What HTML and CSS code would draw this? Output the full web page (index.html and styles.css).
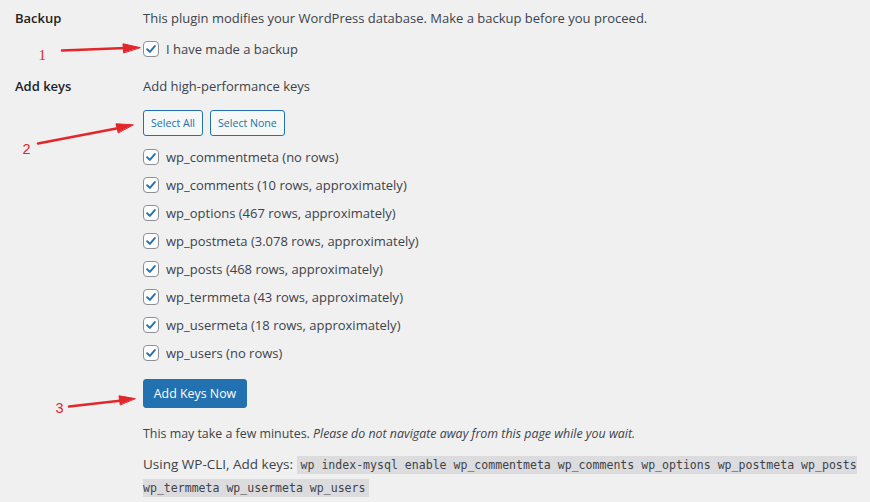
FILE: index.html
```html
<!DOCTYPE html>
<html lang="en">
<head>
<meta charset="utf-8">
<title>Index MySQL</title>
<link rel="stylesheet" href="styles.css">
</head>
<body>
<div class="form">
  <div class="row row-backup">
    <div class="label">Backup</div>
    <div class="field">
      <p class="text">This plugin modifies your WordPress database. Make a backup before you proceed.</p>
      <label class="cb cb-backup"><span class="box"><svg viewBox="0 0 16 16" width="16" height="16"><path d="M3.6 8.3 L6.7 11.3 L12.4 4.6" fill="none" stroke="#2271b1" stroke-width="2.2" stroke-linecap="round" stroke-linejoin="round"/></svg></span>I have made a backup</label>
    </div>
  </div>
  <div class="row row-keys">
    <div class="label">Add keys</div>
    <div class="field">
      <p class="text">Add high-performance keys</p>
      <div class="btns">
        <button class="btn">Select All</button>
        <button class="btn">Select None</button>
      </div>
      <ul class="tables">
        <li><label class="cb"><span class="box"><svg viewBox="0 0 16 16" width="16" height="16"><path d="M3.6 8.3 L6.7 11.3 L12.4 4.6" fill="none" stroke="#2271b1" stroke-width="2.2" stroke-linecap="round" stroke-linejoin="round"/></svg></span>wp_commentmeta (no rows)</label></li>
        <li><label class="cb"><span class="box"><svg viewBox="0 0 16 16" width="16" height="16"><path d="M3.6 8.3 L6.7 11.3 L12.4 4.6" fill="none" stroke="#2271b1" stroke-width="2.2" stroke-linecap="round" stroke-linejoin="round"/></svg></span>wp_comments (10 rows, approximately)</label></li>
        <li><label class="cb"><span class="box"><svg viewBox="0 0 16 16" width="16" height="16"><path d="M3.6 8.3 L6.7 11.3 L12.4 4.6" fill="none" stroke="#2271b1" stroke-width="2.2" stroke-linecap="round" stroke-linejoin="round"/></svg></span>wp_options (467 rows, approximately)</label></li>
        <li><label class="cb"><span class="box"><svg viewBox="0 0 16 16" width="16" height="16"><path d="M3.6 8.3 L6.7 11.3 L12.4 4.6" fill="none" stroke="#2271b1" stroke-width="2.2" stroke-linecap="round" stroke-linejoin="round"/></svg></span>wp_postmeta (3.078 rows, approximately)</label></li>
        <li><label class="cb"><span class="box"><svg viewBox="0 0 16 16" width="16" height="16"><path d="M3.6 8.3 L6.7 11.3 L12.4 4.6" fill="none" stroke="#2271b1" stroke-width="2.2" stroke-linecap="round" stroke-linejoin="round"/></svg></span>wp_posts (468 rows, approximately)</label></li>
        <li><label class="cb"><span class="box"><svg viewBox="0 0 16 16" width="16" height="16"><path d="M3.6 8.3 L6.7 11.3 L12.4 4.6" fill="none" stroke="#2271b1" stroke-width="2.2" stroke-linecap="round" stroke-linejoin="round"/></svg></span>wp_termmeta (43 rows, approximately)</label></li>
        <li><label class="cb"><span class="box"><svg viewBox="0 0 16 16" width="16" height="16"><path d="M3.6 8.3 L6.7 11.3 L12.4 4.6" fill="none" stroke="#2271b1" stroke-width="2.2" stroke-linecap="round" stroke-linejoin="round"/></svg></span>wp_usermeta (18 rows, approximately)</label></li>
        <li><label class="cb"><span class="box"><svg viewBox="0 0 16 16" width="16" height="16"><path d="M3.6 8.3 L6.7 11.3 L12.4 4.6" fill="none" stroke="#2271b1" stroke-width="2.2" stroke-linecap="round" stroke-linejoin="round"/></svg></span>wp_users (no rows)</label></li>
      </ul>
      <button class="btn-primary">Add Keys Now</button>
      <p class="note">This may take a few minutes. <em>Please do not navigate away from this page while you wait.</em></p>
      <p class="cli">Using WP-CLI, Add keys: <code>wp index-mysql enable wp_commentmeta wp_comments wp_options wp_postmeta wp_posts wp_termmeta wp_usermeta wp_users</code></p>
    </div>
  </div>
</div>
<svg class="annot" width="870" height="502" viewBox="0 0 870 502">
  <g stroke="#e3262a" stroke-width="2.6" stroke-linecap="round" fill="#e3262a">
    <line x1="62" y1="50.5" x2="126" y2="48"/>
    <polygon points="140,47.6 123,43.8 123.6,52.6" stroke-width="1"/>
    <line x1="38" y1="143.5" x2="119" y2="128"/>
    <polygon points="133,124.8 116,123.8 118.2,132.6" stroke-width="1"/>
    <line x1="69" y1="406.5" x2="122" y2="400.5"/>
    <polygon points="135,398.6 119,395.8 120.2,404.6" stroke-width="1"/>
  </g>
  <text class="num num-serif" x="38.5" y="59.5">1</text>
  <text class="num" x="22.5" y="154">2</text>
  <text class="num" x="55.5" y="412.5">3</text>
</svg>
</body>
</html>
```
FILE: styles.css
```css
html, body {
  margin: 0;
  padding: 0;
}
body {
  background: #f0f0f1;
  color: #3c434a;
  font-family: "Open Sans", "Noto Sans", sans-serif;
  font-size: 13px;
  width: 870px;
  height: 502px;
  overflow: hidden;
  position: relative;
}
.form {
  padding-top: 8px;
}
.row {
  display: grid;
  grid-template-columns: 143px 1fr;
}
.row-keys {
  margin-top: 17px;
}
.label {
  padding-left: 15px;
  font-weight: 600;
  color: #1d2327;
  line-height: 20px;
}
.field {
  padding-right: 8px;
  line-height: 20px;
}
.text {
  margin: 0;
}
.cb {
  display: flex;
  align-items: center;
  height: 20px;
}
.cb-backup {
  margin-top: 11px;
}
.box {
  width: 16px;
  height: 16px;
  box-sizing: border-box;
  border: 1px solid #8c8f94;
  border-radius: 4px;
  background: #fff;
  display: flex;
  align-items: center;
  justify-content: center;
  margin-right: 7px;
  flex: none;
}
.box svg {
  display: block;
  width: 14px;
  height: 14px;
}
.btns {
  margin-top: 14px;
  display: flex;
  gap: 7px;
}
.btn {
  height: 26px;
  box-sizing: border-box;
  border: 1px solid #2271b1;
  border-radius: 3px;
  background: #f6f7f7;
  color: #2271b1;
  font-family: "Open Sans", "Noto Sans", sans-serif;
  font-size: 10.6px;
  padding: 0 7px;
  margin: 0;
}
.tables {
  list-style: none;
  margin: 7px 0 0;
  padding: 0;
}
.tables li {
  height: 28px;
  display: flex;
  align-items: center;
}
.btn-primary {
  margin-top: 12px;
  height: 29px;
  width: 104px;
  border: 1px solid #2271b1;
  border-radius: 3px;
  background: #2271b1;
  color: #fff;
  font-family: "Open Sans", "Noto Sans", sans-serif;
  font-size: 12.4px;
  padding: 0;
  display: block;
}
.note {
  margin: 16px 0 0;
  font-size: 12.4px;
  line-height: 20px;
}
.cli {
  margin: 9px 0 0;
  font-size: 13.5px;
  line-height: 22px;
}
code {
  font-family: "DejaVu Sans Mono", "Liberation Mono", monospace;
  font-size: 11.55px;
  background: #dcdcde;
  padding: 2px 4px 2px;
  color: #3c434a;
}
.annot {
  position: absolute;
  left: 0;
  top: 0;
  pointer-events: none;
}
.num {
  fill: #e3262a;
  font-family: "Liberation Sans", sans-serif;
  font-size: 14.5px;
}
.num-serif {
  font-family: "Liberation Serif", serif;
  font-size: 15px;
}
```
